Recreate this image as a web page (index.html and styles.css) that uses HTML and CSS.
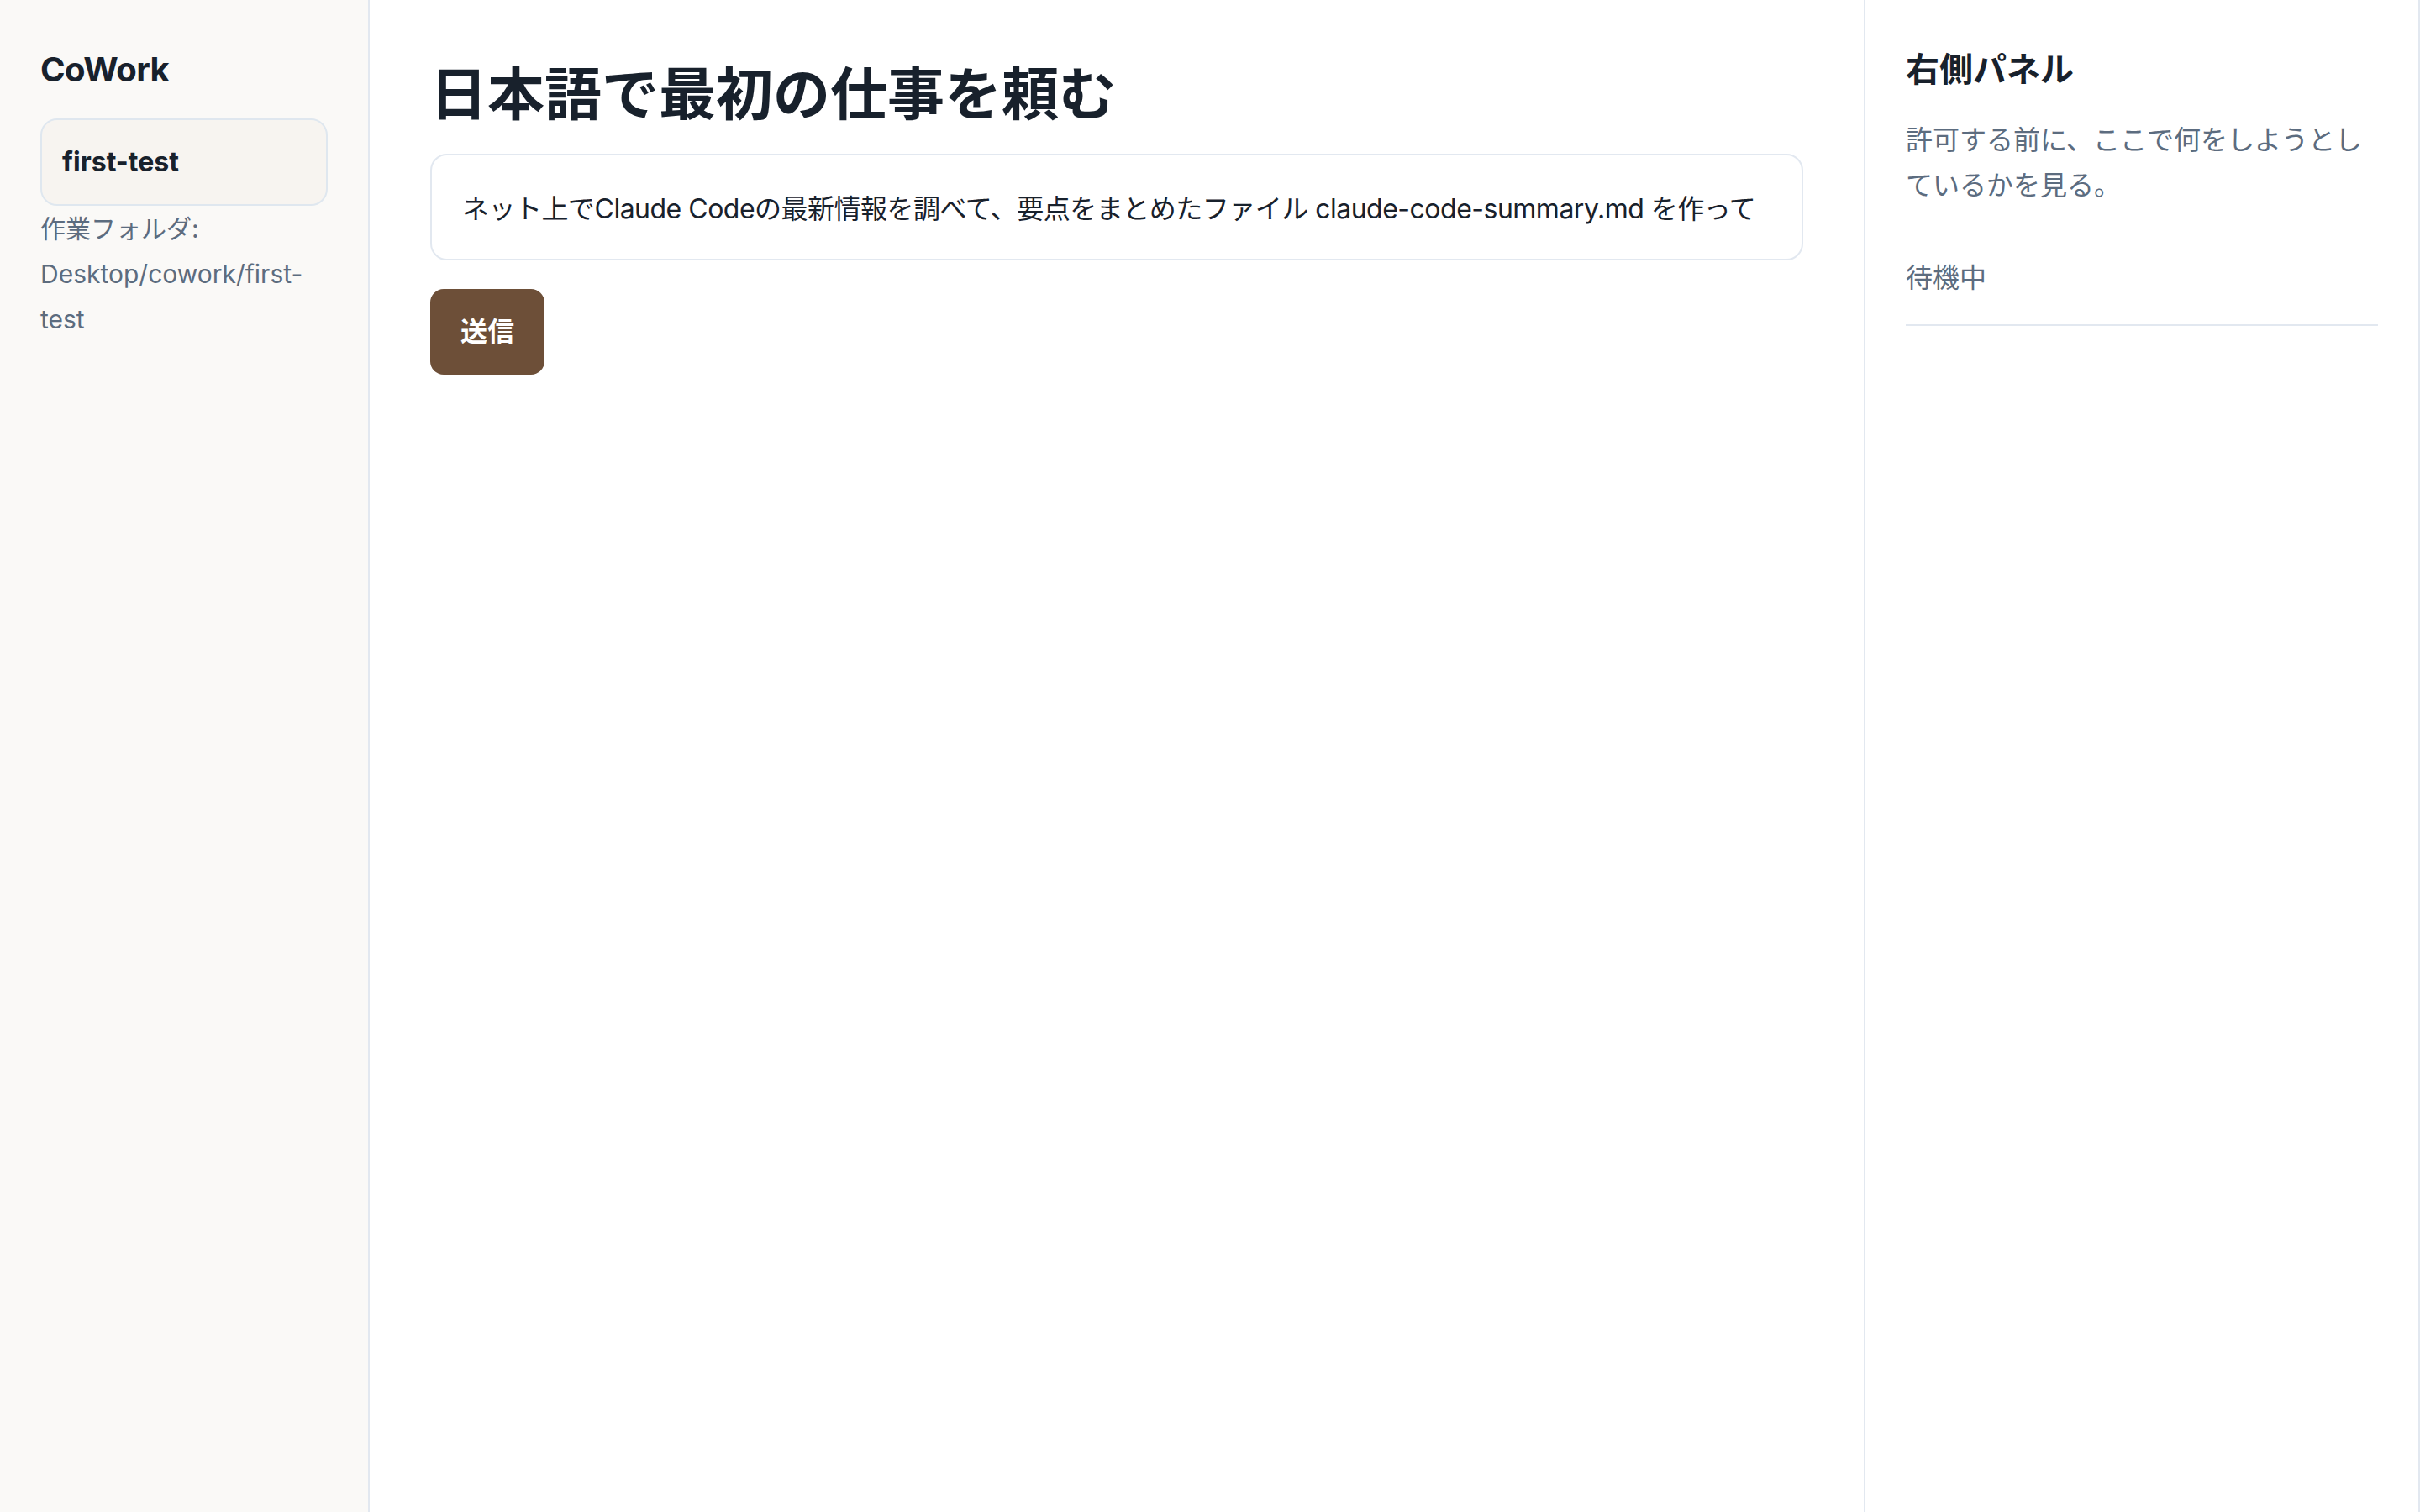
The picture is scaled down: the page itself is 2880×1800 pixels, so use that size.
FILE: index.html
```html
<!DOCTYPE html>
<html lang="ja">
<head>
  <meta charset="UTF-8" />
  <meta name="viewport" content="width=device-width, initial-scale=1.0"/>
  <title>CoWork</title>
  <link rel="stylesheet" href="styles.css">
</head>
<body>

  <div class="app">
    <aside class="sidebar">
      <h2 class="brand">CoWork</h2>
      <div class="project selected">first-test</div>
      <p class="folder">作業フォルダ: Desktop/cowork/first-test</p>
    </aside>

    <main class="main">
      <h1>日本語で最初の仕事を頼む</h1>
      <input type="text" id="taskInput" class="task-input" value="ネット上でClaude Codeの最新情報を調べて、要点をまとめたファイル claude-code-summary.md を作って"/>
      <button class="btn" onclick="sendTask()">送信</button>
    </main>

    <aside class="panel">
      <h2>右側パネル</h2>
      <p class="panel-desc">許可する前に、ここで何をしようとしているかを見る。</p>
      <div class="status" id="status">待機中</div>
    </aside>
  </div>

  <script>
    function sendTask() {
      const task = document.getElementById("taskInput").value;
      if (!task) return;
      document.getElementById("status").innerText = "実行中";
    }
  </script>

</body>
</html>
```

FILE: styles.css
```css
* {
  box-sizing: border-box;
  margin: 0;
  padding: 0;
}

body {
  font-family: Inter, "Noto Sans CJK JP", sans-serif;
  background: #fff;
  color: #18212c;
}

.app {
  display: flex;
  min-height: 100vh;
}

/* left column */
.sidebar {
  width: 440px;
  flex-shrink: 0;
  background: #faf9f7;
  border-right: 2px solid #e2e8f0;
  padding: 48px;
}

.brand {
  font-size: 40px;
  line-height: 48px;
  font-weight: 700;
  letter-spacing: -0.5px;
  margin: 11px 0 34px;
}

.project {
  background: #f7f4f0;
  border: 2px solid #dfe7ef;
  border-radius: 20px;
  padding: 24px;
  font-size: 32px;
  line-height: 52px;
  font-weight: 700;
}

.folder {
  font-size: 30px;
  line-height: 54px;
  color: #5c6c7f;
}

/* center column */
.main {
  flex: 1;
  padding: 72px;
}

h1 {
  font-size: 68px;
  line-height: 1.2;
  font-weight: 700;
  margin-bottom: 29px;
}

.task-input {
  display: block;
  width: 100%;
  height: 127px;
  padding: 0 36px;
  font-family: inherit;
  font-size: 32px;
  letter-spacing: -0.5px;
  color: #18212c;
  background: #fff;
  border: 2px solid #e2e8f0;
  border-radius: 20px;
  outline: none;
  margin-bottom: 34px;
}

.btn {
  display: block;
  padding: 24px 36px;
  font-family: inherit;
  font-size: 32px;
  line-height: 54px;
  font-weight: 700;
  color: #fff;
  background: #6d4f38;
  border: none;
  border-radius: 16px;
  cursor: pointer;
}

.btn:hover {
  background: #5e4330;
}

/* right column */
.panel {
  width: 662px;
  flex-shrink: 0;
  border-left: 2px solid #e2e8f0;
  border-right: 2px solid #e2e8f0;
  padding: 48px;
}

.panel h2 {
  font-size: 40px;
  line-height: 48px;
  font-weight: 700;
  margin: 11px 0 33px;
}

.panel-desc {
  font-size: 32px;
  line-height: 54px;
  color: #5c6c7f;
  margin-bottom: 28px;
}

.status {
  font-size: 32px;
  line-height: 54px;
  color: #5c6c7f;
  padding: 28px 0;
  border-bottom: 2px solid #e2e8f0;
}
```
